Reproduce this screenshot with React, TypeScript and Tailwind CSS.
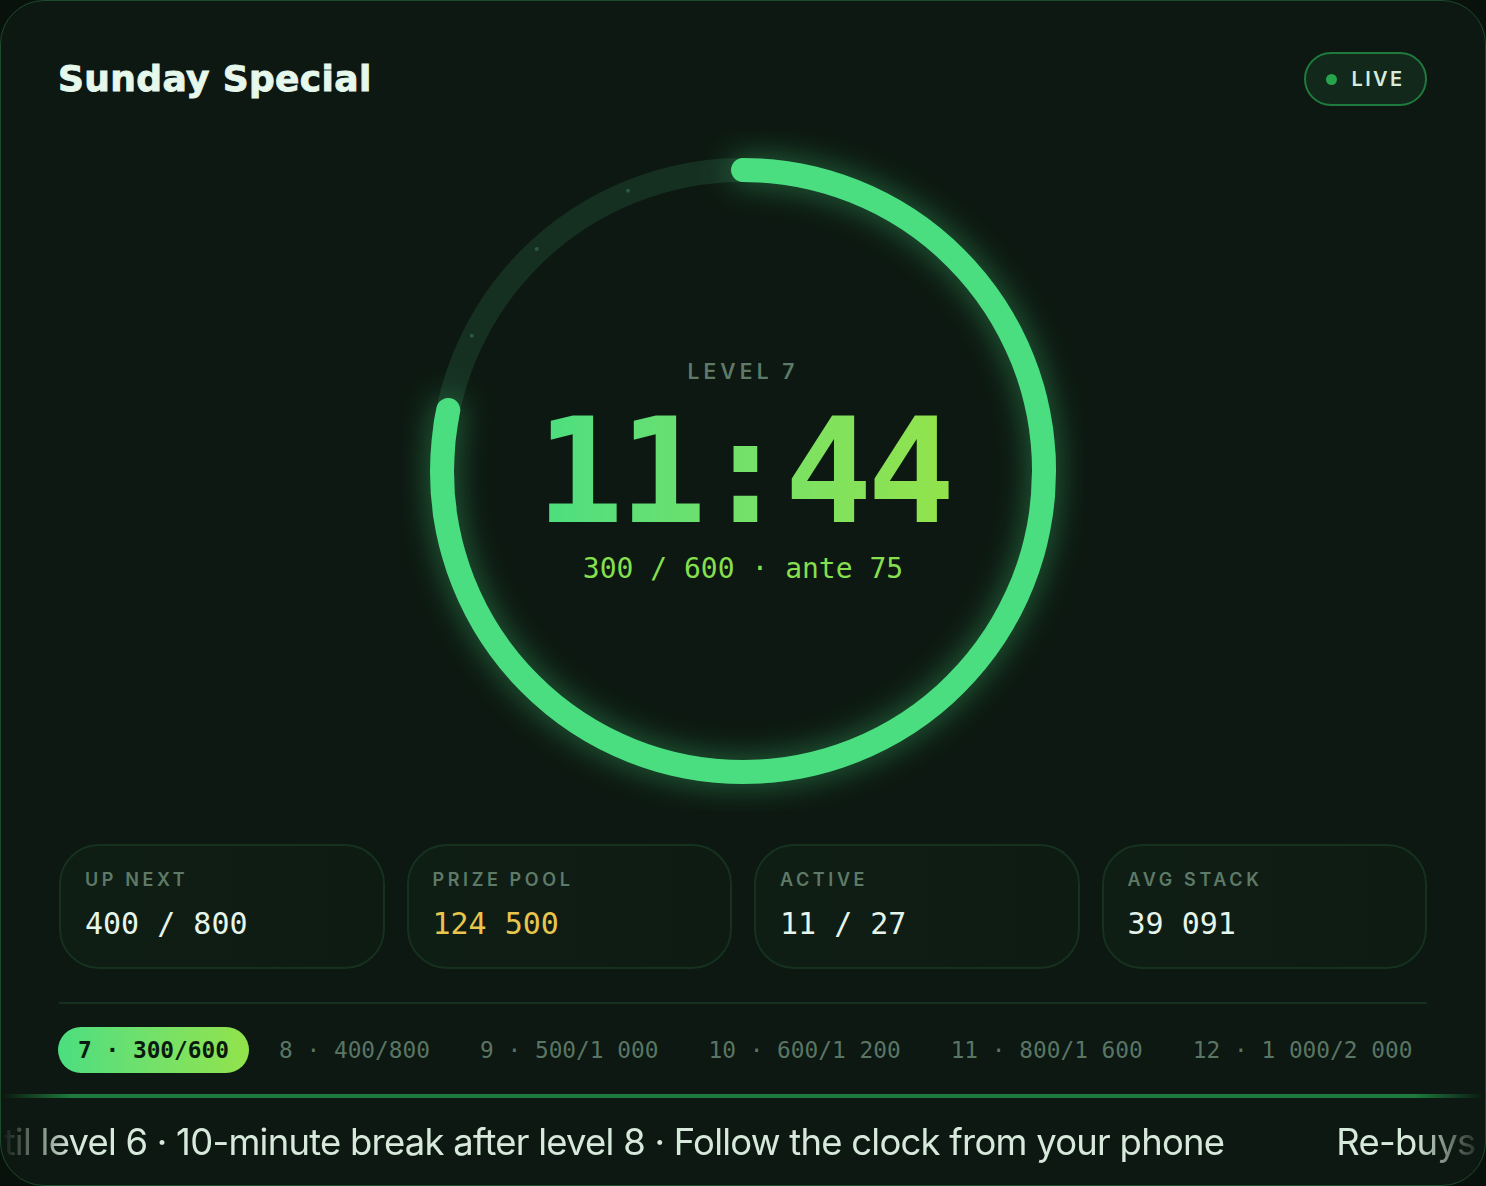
import React from 'react';

const mono = "font-['DejaVu_Sans_Mono','Liberation_Mono',monospace]";
const sans = "font-['Inter','Noto_Sans',sans-serif]";

const stats = [
  { label: 'UP NEXT', value: '400 / 800', tone: 'text-[#e6f5ea]' },
  { label: 'PRIZE POOL', value: '124 500', tone: 'text-[#e8c54c]' },
  { label: 'ACTIVE', value: '11 / 27', tone: 'text-[#e6f5ea]' },
  { label: 'AVG STACK', value: '39 091', tone: 'text-[#e6f5ea]' },
];

const levels = [
  { n: 7, blinds: '300/600', active: true },
  { n: 8, blinds: '400/800' },
  { n: 9, blinds: '500/1 000' },
  { n: 10, blinds: '600/1 200' },
  { n: 11, blinds: '800/1 600' },
  { n: 12, blinds: '1 000/2 000' },
];

const tickerText =
  'Re-buys open until level 6 · 10-minute break after level 8 · Follow the clock from your phone';

// ring geometry
const R = 301;
const C = 2 * Math.PI * R;
const remaining = 704 / 900;
const tickAngles = [22.3, 42.9, 63.5];

function Ring() {
  return (
    <svg
      width="680"
      height="680"
      viewBox="0 0 680 680"
      className="absolute inset-0"
    >
      <circle cx="340" cy="340" r={R} fill="none" stroke="#153021" strokeWidth="24" />
      {tickAngles.map((a) => {
        const rad = (a * Math.PI) / 180;
        return (
          <circle
            key={a}
            cx={340 - Math.sin(rad) * 303}
            cy={340 - Math.cos(rad) * 303}
            r="2"
            fill="#2b5a3c"
          />
        );
      })}
      <circle
        cx="340"
        cy="340"
        r={R}
        fill="none"
        stroke="#4ade80"
        strokeWidth="24"
        strokeLinecap="round"
        strokeDasharray={`${C * remaining} ${C}`}
        transform="rotate(-90 340 340)"
        style={{ filter: 'drop-shadow(0 0 16px rgba(74,222,128,0.45))' }}
      />
    </svg>
  );
}

export default function App() {
  return (
    <div className="w-full h-[1186px] bg-[#08110c]">
      <div className="h-full rounded-[44px] border border-[#1d4a2c] bg-[#0c1811] overflow-hidden flex flex-col">
        {/* Header */}
        <div className="flex items-center justify-between px-[58px] pt-[51px]">
          <h1 className="font-['DejaVu_Sans',sans-serif] font-bold text-[36px] leading-none tracking-[0.01em] text-[#e6f7ec] [-webkit-text-stroke:0.9px_#e6f7ec] -ml-[1px]">
            Sunday Special
          </h1>
          <div className="h-[54px] w-[123px] rounded-full border-2 border-[#1f7a3d] bg-[#11281a] flex items-center justify-center gap-[14px]">
            <span className="w-[11px] h-[11px] rounded-full bg-[#27a24d]" />
            <span className={`${sans} text-[20px] font-semibold tracking-[0.12em] text-[#d8ebdd]`}>LIVE</span>
          </div>
        </div>

        {/* Clock */}
        <div className="relative mx-auto mt-[25px] w-[680px] h-[680px] flex flex-col items-center justify-center">
          <Ring />
          <div className="relative flex flex-col items-center pt-[2px]">
            <div className={`${sans} text-[21px] font-semibold tracking-[0.2em] text-[#5e7a67] leading-none`}>LEVEL 7</div>
            <div
              className={`${mono} font-bold text-[146px] leading-[0.85] tracking-[-5px] mt-[27px] bg-gradient-to-r from-[#4ade80] to-[#92e34a] bg-clip-text text-transparent`}
            >
              11:44
            </div>
            <div className={`${mono} text-[28px] leading-none text-[#86df4e] mt-[21px]`}>300 / 600 · ante 75</div>
          </div>
        </div>

        {/* Stats */}
        <div className="grid grid-cols-4 gap-[22px] px-[58px] mt-[33px]">
          {stats.map((s) => (
            <div
              key={s.label}
              className="h-[125px] rounded-[40px] border-2 border-[#16321f] bg-gradient-to-r from-[#0f1e15] to-[#0e1b13] pl-[24px] pt-[25px]"
            >
              <div className={`${sans} text-[18px] font-semibold tracking-[0.2em] text-[#5e7a67] leading-none`}>{s.label}</div>
              <div className={`${mono} text-[30px] leading-none mt-[20px] ${s.tone}`}>{s.value}</div>
            </div>
          ))}
        </div>

        <div className="mx-[58px] mt-[33px] h-[2px] bg-[#15301f]" />

        {/* Levels */}
        <div className="flex items-center gap-[10px] px-[57px] mt-[23px] whitespace-nowrap">
          {levels.map((l) =>
            l.active ? (
              <div
                key={l.n}
                className={`${mono} shrink-0 h-[46px] px-[20px] rounded-full flex items-center font-bold text-[22.8px] text-[#0a1a0f] bg-gradient-to-r from-[#4ade80] to-[#92e34a]`}
              >
                {l.n} · {l.blinds}
              </div>
            ) : (
              <div key={l.n} className={`${mono} shrink-0 h-[46px] px-[20px] flex items-center text-[22.8px] text-[#5a7564]`}>
                {l.n} · {l.blinds}
              </div>
            ),
          )}
        </div>

        {/* Ticker */}
        <div className="mt-[21px] flex-1 border-t-4 border-[#1f7a3d] overflow-hidden [mask-image:linear-gradient(to_right,transparent,black_70px,black_calc(100%-70px),transparent)]">
          <div className={`${sans} flex gap-[112px] whitespace-nowrap text-[36.4px] tracking-[-0.02em] text-[#d6e9db] pt-[17px] -translate-x-[281px]`}>
            <span>{tickerText}</span>
            <span>{tickerText}</span>
          </div>
        </div>
      </div>
    </div>
  );
}
